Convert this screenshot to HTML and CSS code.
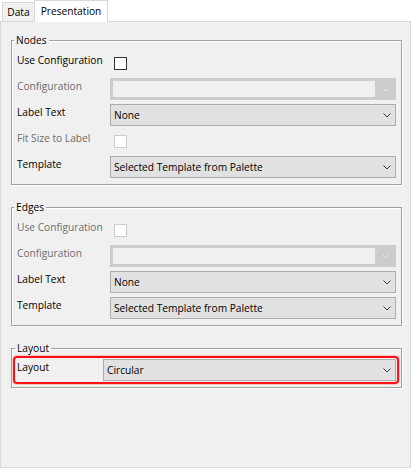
FILE: index.html
```html
<!DOCTYPE html>
<html lang="en">
<head>
    <meta charset="UTF-8">
    <title>Presentation</title>
    <link rel="stylesheet" href="styles.css">
</head>
<body>
    <div class="tabs">
        <div class="tab">Data</div>
        <div class="tab active">Presentation</div>
    </div>

    <div class="panel">
        <fieldset class="group">
            <legend>Nodes</legend>
            <div class="rows">
                <div class="row">
                    <span class="label">Use Configuration</span>
                    <span class="check"></span>
                </div>
                <div class="row disabled">
                    <span class="label">Configuration</span>
                    <div class="combo">
                        <span class="value"></span>
                        <span class="arrow"><svg width="8" height="5" viewBox="0 0 8 5"><path d="M0.5 0.5 L4 4 L7.5 0.5" /></svg></span>
                    </div>
                </div>
                <div class="row">
                    <span class="label">Label Text</span>
                    <div class="combo">
                        <span class="value">None</span>
                        <span class="arrow"><svg width="8" height="5" viewBox="0 0 8 5"><path d="M0.5 0.5 L4 4 L7.5 0.5" /></svg></span>
                    </div>
                </div>
                <div class="row disabled">
                    <span class="label">Fit Size to Label</span>
                    <span class="check"></span>
                </div>
                <div class="row">
                    <span class="label">Template</span>
                    <div class="combo">
                        <span class="value">Selected Template from Palette</span>
                        <span class="arrow"><svg width="8" height="5" viewBox="0 0 8 5"><path d="M0.5 0.5 L4 4 L7.5 0.5" /></svg></span>
                    </div>
                </div>
            </div>
        </fieldset>

        <fieldset class="group">
            <legend>Edges</legend>
            <div class="rows">
                <div class="row disabled">
                    <span class="label">Use Configuration</span>
                    <span class="check"></span>
                </div>
                <div class="row disabled">
                    <span class="label">Configuration</span>
                    <div class="combo">
                        <span class="value"></span>
                        <span class="arrow"><svg width="8" height="5" viewBox="0 0 8 5"><path d="M0.5 0.5 L4 4 L7.5 0.5" /></svg></span>
                    </div>
                </div>
                <div class="row">
                    <span class="label">Label Text</span>
                    <div class="combo">
                        <span class="value">None</span>
                        <span class="arrow"><svg width="8" height="5" viewBox="0 0 8 5"><path d="M0.5 0.5 L4 4 L7.5 0.5" /></svg></span>
                    </div>
                </div>
                <div class="row">
                    <span class="label">Template</span>
                    <div class="combo">
                        <span class="value">Selected Template from Palette</span>
                        <span class="arrow"><svg width="8" height="5" viewBox="0 0 8 5"><path d="M0.5 0.5 L4 4 L7.5 0.5" /></svg></span>
                    </div>
                </div>
            </div>
        </fieldset>

        <fieldset class="group layout-group">
            <legend>Layout</legend>
            <div class="highlight">
                <span class="label">Layout</span>
                <div class="combo">
                    <span class="value">Circular</span>
                    <span class="arrow"><svg width="8" height="5" viewBox="0 0 8 5"><path d="M0.5 0.5 L4 4 L7.5 0.5" /></svg></span>
                </div>
            </div>
        </fieldset>
    </div>
</body>
</html>
```

FILE: styles.css
```css
body {
    margin: 0;
    background-color: #fff;
    font-family: 'Open Sans', sans-serif;
    font-size: 10.2px;
    color: #000;
}

/* Tab strip */
.tabs {
    display: flex;
    align-items: flex-end;
    height: 21px;
    padding-left: 2px;
}

.tab {
    display: flex;
    align-items: center;
    justify-content: center;
    box-sizing: border-box;
    width: 33px;
    height: 19px;
    border: 1px solid #d9d9d9;
    border-bottom: none;
    background-color: #f0f0f0;
}

.tab.active {
    width: 74px;
    height: 22px;
    margin-left: -1px;
    margin-bottom: -1px;
    padding-bottom: 2px;
    background-color: #fff;
    position: relative;
    z-index: 1;
}

.panel {
    box-sizing: border-box;
    width: 411px;
    height: 447px;
    padding: 11px 8px 0 10px;
    border: 1px solid #d9d9d9;
    background-color: #f0f0f0;
}

/* Group boxes */
.group {
    margin: 0 0 15px 0;
    padding: 0;
    min-inline-size: 0;
    border: 1px solid #a0a0a0;
    box-shadow: inset 1px 1px 0 #fff, 1px 1px 0 #fff;
}

.group legend {
    margin-left: 2px;
    padding: 0 2px;
    line-height: 14px;
}

.rows {
    display: flex;
    flex-direction: column;
    gap: 4px;
    padding: 5px 5px 6px 5px;
}

.row {
    display: flex;
    align-items: center;
    height: 22px;
}

.label {
    flex: none;
    align-self: flex-start;
    width: 93px;
    line-height: 16px;
    white-space: nowrap;
}

.disabled .label {
    color: #6d6d6d;
}

/* Checkboxes */
.check {
    box-sizing: border-box;
    width: 13px;
    height: 13px;
    margin-left: 4px;
    border: 1px solid #333;
    background-color: #fff;
}

.disabled .check {
    border-color: #cccccc;
}

/* Combo boxes */
.combo {
    flex: 1;
    display: flex;
    align-items: center;
    box-sizing: border-box;
    height: 22px;
    border: 1px solid #adadad;
    background-color: #e1e1e1;
}

.combo .value {
    flex: 1;
    padding-left: 3px;
    white-space: nowrap;
}

.combo .arrow {
    display: flex;
    justify-content: center;
    width: 17px;
}

.combo svg path {
    fill: none;
    stroke: #3c3c3c;
    stroke-width: 1;
}

.disabled .combo {
    border-color: #cccccc;
    background-color: #cccccc;
}

.disabled .combo .value {
    align-self: stretch;
    margin: 2px;
    background-color: #f0f0f0;
}

.disabled .combo .arrow {
    width: 18px;
}

.disabled .combo svg path {
    stroke: #e4e4e4;
}

/* Layout group with highlighted row */
.layout-group {
    padding: 1px 2px 3px 1px;
}

.highlight {
    display: flex;
    padding: 1px 1px 1px 2px;
    border: 2px solid #ff1010;
    border-radius: 4px;
    box-shadow: 0 0 0 1px rgba(255, 60, 60, 0.25);
}

.highlight .label {
    width: 86px;
}
```
